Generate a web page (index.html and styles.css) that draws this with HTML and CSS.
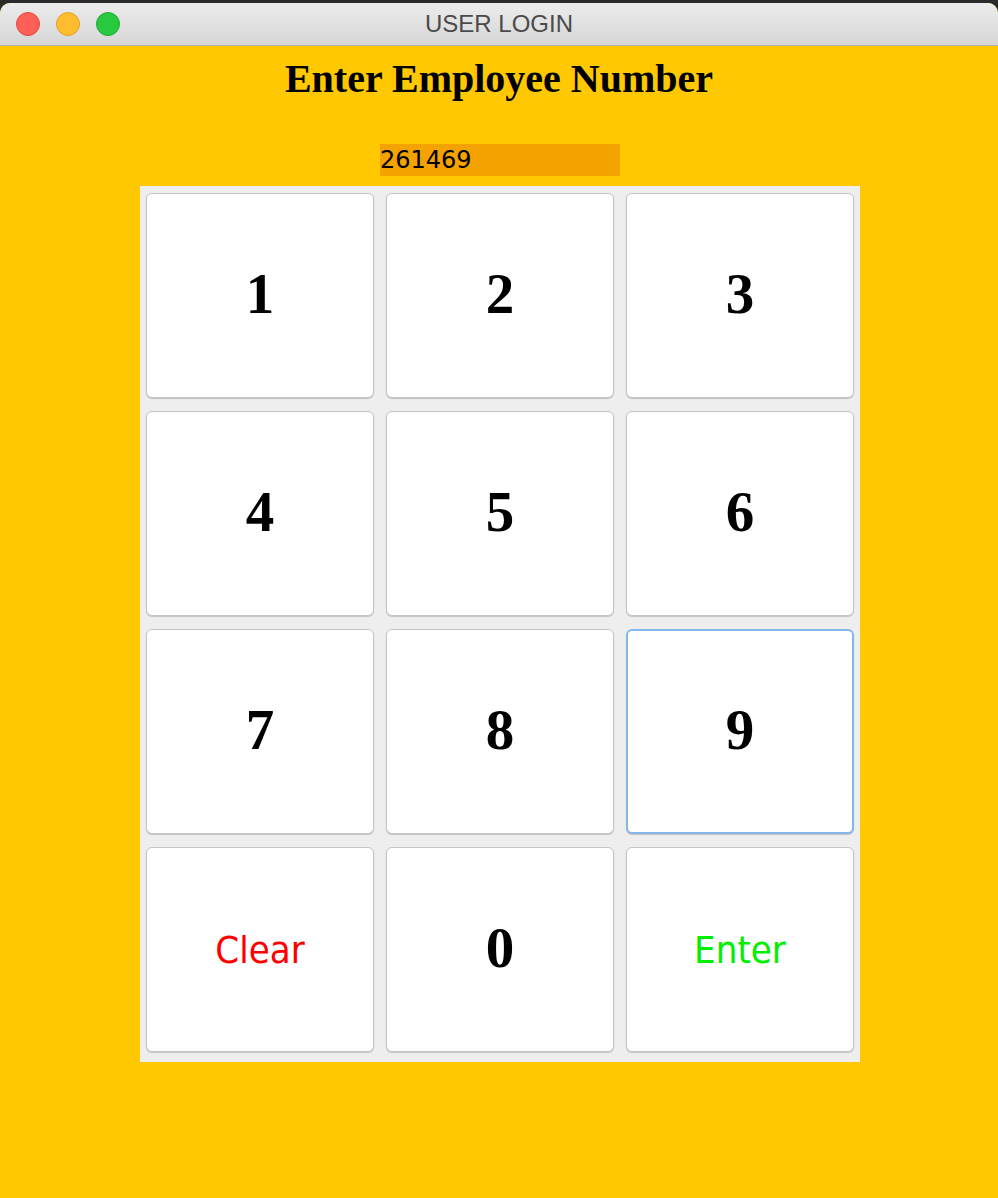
FILE: index.html
```html
<!DOCTYPE html>
<html>
<head>
<meta charset="utf-8">
<link rel="stylesheet" href="styles.css">
</head>
<body>
<div class="window">
  <div class="titlebar">
    <div class="lights">
      <span class="light red"></span>
      <span class="light yellow"></span>
      <span class="light green"></span>
    </div>
    <div class="title">USER LOGIN</div>
  </div>
  <div class="content">
    <h1 class="heading">Enter Employee Number</h1>
    <div class="field">261469</div>
    <div class="pad">
      <button class="key num">1</button>
      <button class="key num">2</button>
      <button class="key num">3</button>
      <button class="key num">4</button>
      <button class="key num">5</button>
      <button class="key num">6</button>
      <button class="key num">7</button>
      <button class="key num">8</button>
      <button class="key num focused">9</button>
      <button class="key word clear">Clear</button>
      <button class="key num">0</button>
      <button class="key word enter">Enter</button>
    </div>
  </div>
</div>
</body>
</html>
```

FILE: styles.css
```css
html, body {
  margin: 0;
  padding: 0;
  height: 100%;
}
body {
  background: #2b2b2b;
  overflow: hidden;
}
.window {
  margin-top: 3px;
  height: 1195px;
  display: flex;
  flex-direction: column;
  border-radius: 10px 10px 0 0;
  overflow: hidden;
  background: #ffc800;
}
.titlebar {
  height: 42px;
  flex: 0 0 auto;
  background: linear-gradient(#ececec, #d6d6d6);
  border-bottom: 1px solid #b4b4b4;
  display: flex;
  align-items: center;
  position: relative;
}
.lights {
  display: flex;
  gap: 16px;
  padding-left: 16px;
}
.light {
  width: 22px;
  height: 22px;
  border-radius: 50%;
  display: block;
}
.red { background: #fe5f57; border: 1px solid #e2463f; }
.yellow { background: #febc2e; border: 1px solid #e0a12a; }
.green { background: #28c840; border: 1px solid #1eab2f; }
.title {
  position: absolute;
  left: 0;
  right: 0;
  top: 0;
  bottom: 0;
  display: flex;
  align-items: center;
  justify-content: center;
  font-family: "Liberation Sans", Arial, sans-serif;
  font-size: 24px;
  color: #4a4a4a;
  pointer-events: none;
}
.content {
  flex: 1;
  display: flex;
  flex-direction: column;
  align-items: center;
}
.heading {
  margin: 10px 0 0 0;
  font-family: "Liberation Serif", "Times New Roman", serif;
  font-weight: bold;
  font-size: 40px;
  line-height: 46px;
  color: #000;
}
.field {
  margin-top: 42px;
  margin-left: 2px;
  width: 240px;
  height: 32px;
  background: #f3a200;
  font-family: "DejaVu Sans", sans-serif;
  font-size: 24px;
  line-height: 32px;
  color: #000;
  padding-left: 0;
  box-sizing: border-box;
}
.pad {
  margin-top: 10px;
  margin-left: 2px;
  background: #eeeeee;
  padding: 7px 6px 10px 6px;
  display: grid;
  grid-template-columns: repeat(3, 228px);
  grid-auto-rows: 205px;
  column-gap: 12px;
  row-gap: 13px;
}
.key {
  margin: 0;
  background: #fff;
  border: 1px solid #c4c4c4;
  border-radius: 6px;
  box-shadow: 0 1px 1px rgba(0, 0, 0, 0.18);
  box-sizing: border-box;
  display: flex;
  align-items: center;
  justify-content: center;
  padding: 0;
}
.num {
  font-family: "Liberation Serif", "Times New Roman", serif;
  font-weight: bold;
  font-size: 57px;
  color: #000;
  padding-bottom: 5px;
}
.word {
  font-family: "DejaVu Sans Condensed", "DejaVu Sans", sans-serif;
  font-size: 38px;
}
.clear { color: #ff0000; }
.enter { color: #00ee00; }
.focused {
  border: 2px solid #86b5ea;
}
```
